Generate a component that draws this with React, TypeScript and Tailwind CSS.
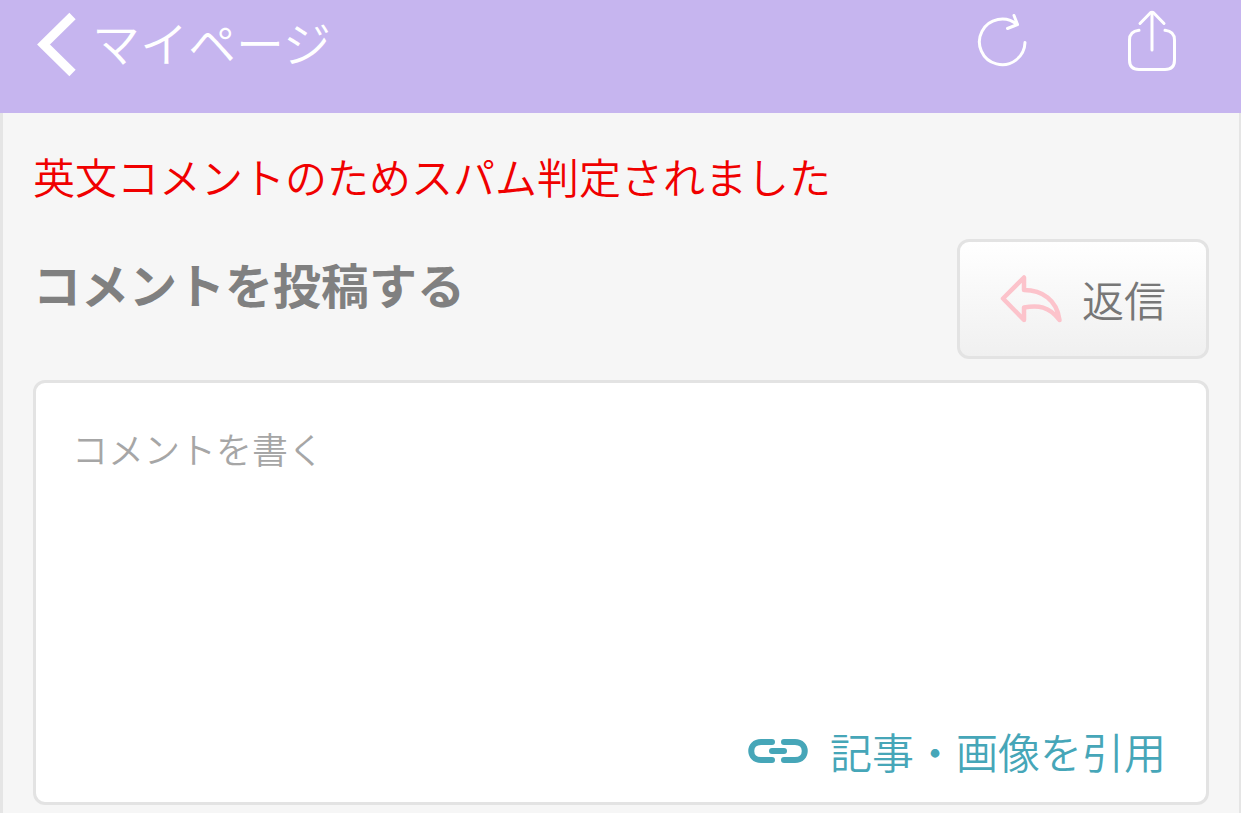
const BackIcon = () => (
  <svg viewBox="0 0 40 72" className="h-18 w-10" fill="none" stroke="#fff" strokeWidth="9" aria-hidden="true">
    <path d="M36.5 8 L7.5 36.5 L36.5 65" />
  </svg>
);

const ReloadIcon = () => (
  <svg
    viewBox="0 0 52 72"
    className="h-18 w-[52px]"
    fill="none"
    stroke="#fff"
    strokeWidth="3"
    strokeLinecap="round"
    strokeLinejoin="round"
    aria-hidden="true"
  >
    <path d="M49 34.500 A22.800 22.800 0 1 1 41 16.500" />
    <path d="M38 7.500 L41.500 16.500 L31.500 20.500" />
  </svg>
);

const ShareIcon = () => (
  <svg
    viewBox="0 0 52 72"
    className="h-18 w-[52px]"
    fill="none"
    stroke="#fff"
    strokeWidth="3"
    strokeLinecap="round"
    strokeLinejoin="round"
    aria-hidden="true"
  >
    <path d="M13 22.3 C7 23 3.5 26.5 3.5 32 V52 Q3.5 61.5 13 61.5 H39 Q48.5 61.5 48.5 52 V32 C48.5 26.5 45 23 39 22.3" />
    <path d="M26 42 V5" />
    <path d="M14 15.5 L24 5.2 Q26 3.4 28 5.2 L38 15.5" />
  </svg>
);

const ReplyIcon = () => (
  <svg
    viewBox="0 0 62 52"
    className="h-[52px] w-[62px]"
    fill="none"
    stroke="#fcc3cb"
    strokeWidth="4.5"
    strokeLinejoin="round"
    aria-hidden="true"
  >
    <path d="M3 25.5 L24 4.500 V17 C42 17 57 27 59.500 47 C49 33 38 32 24 34.500 V47 Z" />
  </svg>
);

const LinkIcon = () => (
  <svg
    viewBox="0 0 60 26"
    className="h-[26px] w-[60px]"
    fill="none"
    stroke="#46a6b8"
    strokeWidth="6"
    strokeLinecap="round"
    aria-hidden="true"
  >
    <path d="M24 4 H13 C0 4 0 22 13 22 H24" />
    <path d="M36 4 H47 C60 4 60 22 47 22 H36" />
    <path d="M24 13 H36" />
  </svg>
);

export default function App() {
  return (
    <div className="flex min-h-screen flex-col bg-[#f6f6f6] font-['Noto_Sans_CJK_JP',sans-serif] font-[350]">
      <header className="flex h-[113px] items-start justify-between bg-[#c6b5ef] pt-2 pr-[63px] pl-9 text-white">
        <a href="#mypage" className="flex items-start gap-4 text-[48px] leading-[66px]">
          <BackIcon />
          マイページ
        </a>
        <div className="flex gap-[98px]">
          <button type="button" aria-label="再読み込み">
            <ReloadIcon />
          </button>
          <button type="button" aria-label="共有">
            <ShareIcon />
          </button>
        </div>
      </header>

      <main className="grow border-r-2 border-l-3 border-[#e5e5e5] px-[30px] pt-9 pb-2">
        <p className="text-[42px] leading-[54px] text-[#f00000]">英文コメントのためスパム判定されました</p>

        <form onSubmit={(e) => e.preventDefault()}>
          <div className="mt-9 flex items-start justify-between">
            <h1 className="mt-2 text-[48px] leading-[72px] font-bold text-[#808080]">
              <label htmlFor="comment">コメントを投稿する</label>
            </h1>
            <button
              type="submit"
              className="flex h-[120px] items-center gap-5 rounded-xl border-3 border-[#e3e3e3] bg-linear-to-b from-white to-[#f0f0f0] px-10 text-[42px] leading-[54px] text-[#777]"
            >
              <ReplyIcon />
              返信
            </button>
          </div>

          <div className="mt-[21px] flex flex-col rounded-xl border-3 border-[#e3e3e3] bg-white pb-6">
            <textarea
              id="comment"
              placeholder="コメントを書く"
              className="h-[314px] resize-none px-9 pt-[38px] text-[36px] leading-[54px] text-[#555] outline-none placeholder:text-[#a6a6a6]"
            />
            <a
              href="#quote"
              className="mr-10 flex items-center gap-[22px] self-end pt-[27px] text-[42px] leading-[54px] text-[#46a6b8]"
            >
              <LinkIcon />
              記事・画像を引用
            </a>
          </div>
        </form>
      </main>
    </div>
  );
}
